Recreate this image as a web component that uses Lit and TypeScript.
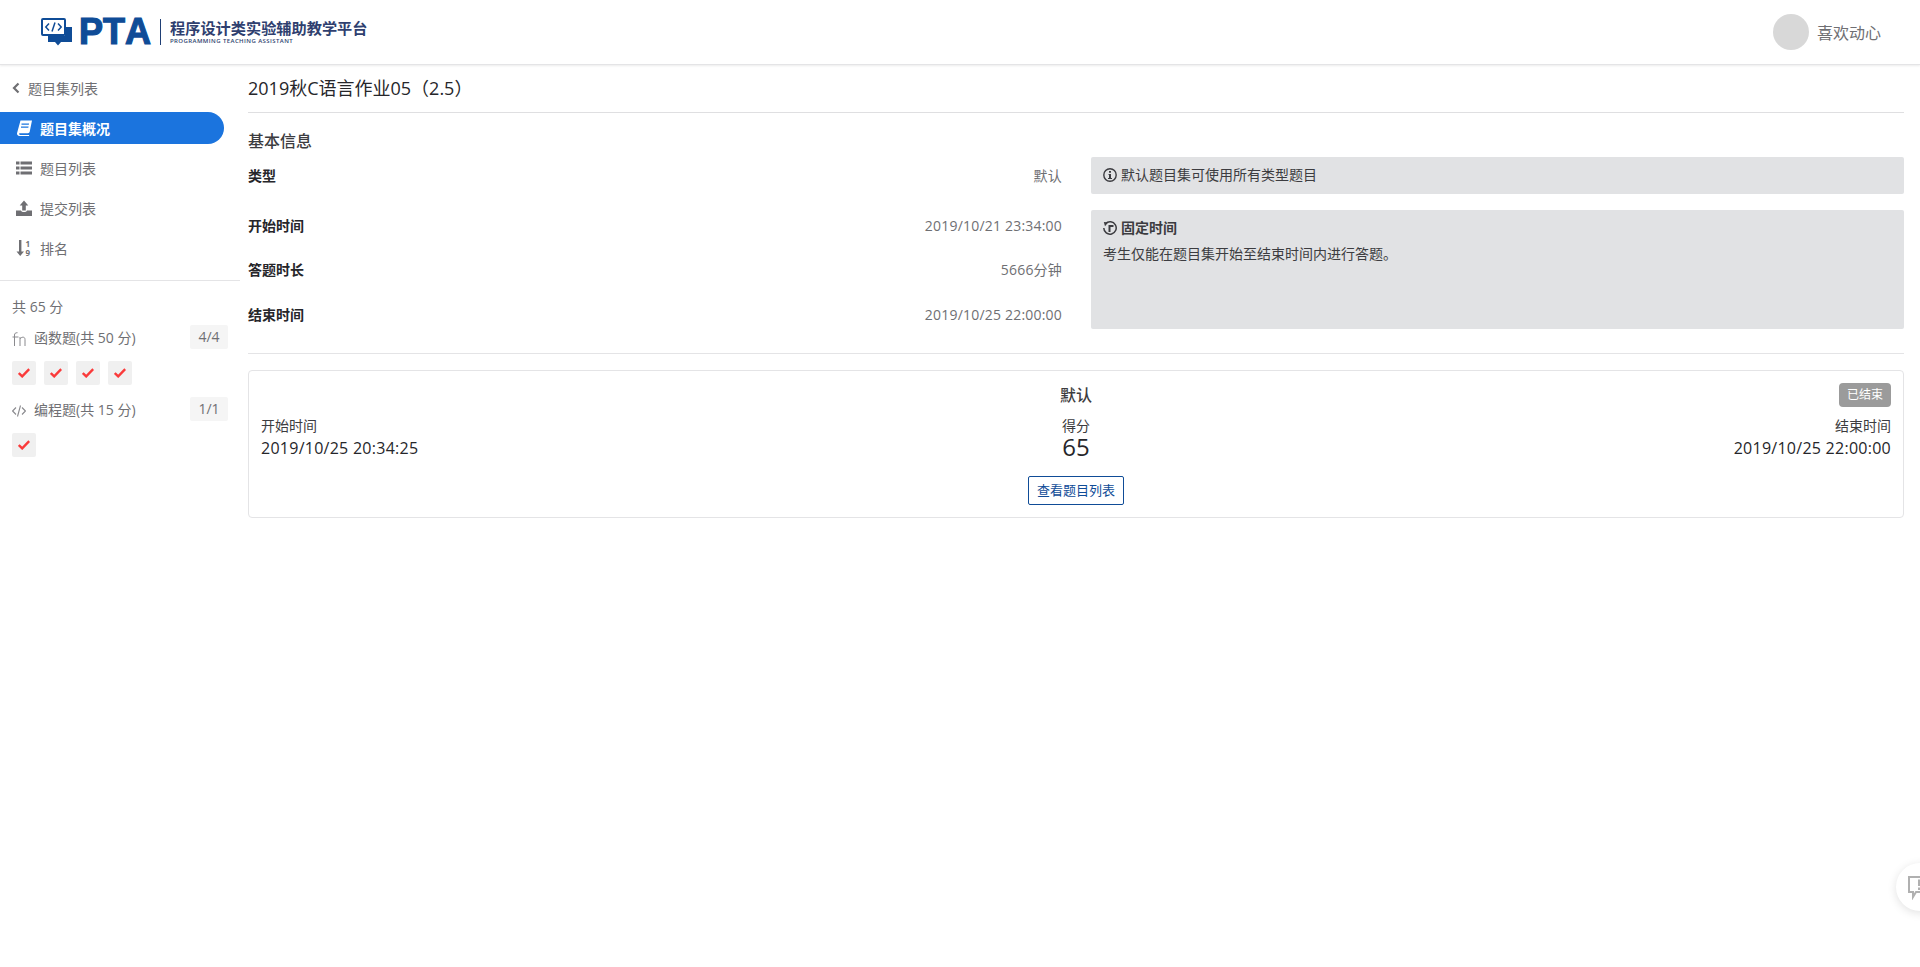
import { LitElement, html, css, svg } from 'lit';
import { customElement } from 'lit/decorators.js';

const checkIcon = svg`<svg class="check" viewBox="0 0 12 10"><path d="M.8 5 4.200 8.400 11.200 1.200" fill="none" stroke="#fa3a3a" stroke-width="2.400"/></svg>`;

const rows = [
  { label: '类型', value: '默认', cls: 'r-type' },
  { label: '开始时间', value: '2019/10/21 23:34:00', cls: 'r-start' },
  { label: '答题时长', value: '5666分钟', cls: 'r-dur' },
  { label: '结束时间', value: '2019/10/25 22:00:00', cls: 'r-end' },
];

@customElement('app-root')
export class AppRoot extends LitElement {
  static override styles = css`
    :host {
      display: block;
      height: 967px;
      overflow: hidden;
      position: relative;
      background: #fff;
      color: #3c3c40;
      font-family: 'Open Sans', 'Noto Sans CJK SC', sans-serif;
      font-size: 14px;
    }
    .topbar {
      height: 64px;
      display: flex;
      align-items: center;
      justify-content: space-between;
      padding: 0 40px;
      border-bottom: 1px solid #e4e4e6;
      box-shadow: 0 1px 2px rgba(0, 0, 0, 0.08);
    }
    .logo {
      display: flex;
      align-items: center;
      height: 32px;
    }
    .logo-mark {
      width: 31px;
      height: 28px;
      margin: 0 7px 0 1px;
    }
    .logo-pta {
      font-family: 'Liberation Sans', sans-serif;
      font-weight: 700;
      font-size: 36px;
      line-height: 32px;
      font-kerning: none;
      color: #0f4c97;
      -webkit-text-stroke: 1.2px #0f4c97;
      width: 74px;
    }
    .logo-sep {
      width: 1px;
      height: 26px;
      background: #1f3f75;
      margin: 0 9px 0 7px;
    }
    .logo-cn {
      font-size: 15.2px;
      line-height: 17px;
      font-weight: 700;
      color: #2f3f6f;
      white-space: nowrap;
    }
    .logo-en {
      font-family: 'Open Sans', sans-serif;
      font-size: 6px;
      line-height: 8px;
      font-weight: 600;
      letter-spacing: 0.42px;
      color: #2f3f6f;
      white-space: nowrap;
    }
    .user {
      display: flex;
      align-items: center;
      gap: 8px;
      margin-right: -1px;
      color: #6f6f73;
      font-size: 16px;
    }
    .avatar {
      width: 36px;
      height: 36px;
      border-radius: 50%;
      background: #d8d8d8;
    }
    .layout {
      display: flex;
    }
    .side {
      width: 240px;
      flex: none;
      padding-top: 7px;
      color: #6f6f73;
    }
    .back {
      height: 32px;
      display: flex;
      align-items: center;
      gap: 7px;
      padding-left: 11px;
    }
    .back svg {
      width: 10px;
      height: 12px;
    }
    .nav {
      margin-top: 8px;
      padding-bottom: 8px;
      border-bottom: 1px solid #e4e4e6;
    }
    .nav-item {
      width: 224px;
      height: 32px;
      margin-bottom: 8px;
      display: flex;
      align-items: center;
      padding-left: 16px;
      box-sizing: border-box;
      border-radius: 0 16px 16px 0;
    }
    .nav-item svg {
      width: 16px;
      height: 16px;
      margin-right: 8px;
      fill: #6f6f73;
      overflow: visible;
    }
    .nav-item.active {
      background: #1b74de;
      color: #fff;
      font-weight: 700;
    }
    .nav-item.active svg {
      fill: #fff;
    }
    .stats {
      padding: 16px 12px 0;
    }
    .total {
      line-height: 20px;
      margin-bottom: 8px;
    }
    .group-row {
      height: 24px;
      display: flex;
      align-items: center;
    }
    .group-row svg {
      width: 14px;
      height: 14px;
      margin: 4px 8px 0 0;
      flex: none;
    }
    .group-name {
      flex: 1;
    }
    .count {
      width: 38px;
      height: 24px;
      line-height: 24px;
      text-align: center;
      background: #f5f5f5;
      border-radius: 2px;
    }
    .tiles {
      display: flex;
      gap: 8px;
      margin: 12px 0;
    }
    .tile {
      width: 24px;
      height: 24px;
      display: flex;
      align-items: center;
      justify-content: center;
      background: #f0f0f0;
      border-radius: 2px;
    }
    .check {
      width: 12px;
      height: 10px;
    }
    .main {
      flex: 1;
      margin: 0 16px 0 8px;
    }
    .title {
      height: 47px;
      line-height: 46px;
      font-size: 18px;
      color: #26262a;
      border-bottom: 1px solid #dfdfe1;
    }
    h3 {
      margin: 0;
      padding-top: 15px;
      height: 29px;
      line-height: 26px;
      font-size: 16px;
      font-weight: 500;
      color: #3c3c40;
    }
    .info {
      display: grid;
      grid-template-columns: 814px 1fr;
      column-gap: 29px;
      padding-bottom: 24px;
      border-bottom: 1px solid #e4e4e6;
    }
    .info-rows {
      display: flex;
      flex-direction: column;
    }
    .info-row {
      display: flex;
      justify-content: space-between;
      line-height: 20px;
      color: #6f6f73;
    }
    .info-row span {
      letter-spacing: 0.2px;
    }
    .info-row b {
      color: #26262a;
      font-weight: 700;
    }
    .r-type {
      height: 59px;
      padding-top: 9px;
      box-sizing: border-box;
    }
    .r-start {
      height: 44px;
    }
    .r-dur {
      height: 45px;
    }
    .r-end {
      height: 20px;
    }
    .notes {
      display: flex;
      flex-direction: column;
      gap: 16px;
    }
    .note {
      background: #e1e2e4;
      border-radius: 2px;
      padding: 8px 12px;
      box-sizing: border-box;
      line-height: 20px;
      color: #3c3c40;
    }
    .note.short {
      height: 37px;
    }
    .note.tall {
      height: 119px;
    }
    .note-head {
      display: flex;
      align-items: center;
      gap: 4px;
    }
    .note-head svg {
      width: 14px;
      height: 14px;
    }
    .note p {
      margin: 6px 0 0;
    }
    .card {
      margin-top: 16px;
      height: 148px;
      box-sizing: border-box;
      border: 1px solid #e4e4e6;
      border-radius: 4px;
      padding: 12px;
      display: grid;
      grid-template-columns: 1fr auto 1fr;
      position: relative;
    }
    .card-left,
    .card-right {
      padding-top: 33px;
      line-height: 20px;
      color: #3c3c40;
    }
    .card-right {
      text-align: right;
    }
    .date {
      font-size: 16px;
      line-height: 24px;
      letter-spacing: 0.26px;
      color: #26262a;
    }
    .card-mid {
      display: flex;
      flex-direction: column;
      align-items: center;
    }
    .card-name {
      font-size: 16px;
      font-weight: 500;
      line-height: 24px;
      color: #3c3c40;
      margin-bottom: 9px;
    }
    .score-label {
      line-height: 20px;
    }
    .score {
      font-size: 24px;
      line-height: 22px;
      color: #26262a;
    }
    .btn {
      margin-top: 18px;
      padding: 0 8px;
      height: 29px;
      line-height: 27px;
      box-sizing: border-box;
      border: 1px solid #0f4c97;
      border-radius: 2px;
      background: #fff;
      color: #0f4c97;
      font-family: inherit;
      font-size: 13px;
    }
    .status {
      position: absolute;
      top: 12px;
      right: 12px;
      height: 24px;
      line-height: 24px;
      padding: 0 8px;
      font-size: 12px;
      color: #fff;
      background: #9b9b9b;
      border-radius: 4px;
    }
    .feedback {
      position: absolute;
      left: 1896px;
      top: 863px;
      width: 48px;
      height: 48px;
      border-radius: 50%;
      background: #fff;
      box-shadow: 0 2px 10px rgba(0, 0, 0, 0.12);
    }
    .feedback svg {
      position: absolute;
      left: 12px;
      top: 13px;
      width: 24px;
      height: 24px;
    }
  `;

  private renderLogo() {
    return html`<div class="logo">
      <svg class="logo-mark" viewBox="0 0 31 28">
        <path d="M7 18h17v-9h7v15H20l-3 3.500-3-3.500H7z" fill="#0f4c97" />
        <rect x="1" y="1" width="23" height="16" rx="1" fill="#fff" stroke="#0f4c97" stroke-width="2" />
        <path d="M8 5.500 4.800 9 8 12.500M17 5.500l3.200 3.500-3.200 3.500M14 4.500l-3 9" fill="none" stroke="#0f4c97" stroke-width="1.500" />
      </svg>
      <div class="logo-pta">PTA</div>
      <div class="logo-sep"></div>
      <div>
        <div class="logo-cn">程序设计类实验辅助教学平台</div>
        <div class="logo-en">PROGRAMMING TEACHING ASSISTANT</div>
      </div>
    </div>`;
  }

  private renderSide() {
    return html`<aside class="side">
      <div class="back">
        <svg viewBox="0 0 10 12"><path d="M7.500 1.500 3 6l4.500 4.500" fill="none" stroke="#6f6f73" stroke-width="2.200" /></svg>
        <span>题目集列表</span>
      </div>
      <div class="nav">
        <div class="nav-item active">
          <svg viewBox="0 0 16 16"><path fill-rule="evenodd" d="M4.500 .5H16l-2.300 11.300c-.2.900-.8 1.400-1.700 1.400H4c-.7 0-1 .4-.9.8s.4.900 1 .9h9v1H3.500C1.800 15.900.8 14.800 1 13.300zM5.500 3.500v1.300h7.300l.3-1.300zM5 6.500v1.300h7.300l.3-1.300z" /></svg>
          题目集概况
        </div>
        <div class="nav-item">
          <svg viewBox="0 0 16 16"><path d="M0 1.500h3.500v3H0zM4.500 1.500H16v3H4.500zM0 6.500h3.500v3H0zM4.500 6.500H16v3H4.500zM0 11.500h3.500v3H0zM4.500 11.500H16v3H4.500z" /></svg>
          题目列表
        </div>
        <div class="nav-item">
          <svg viewBox="0 0 16 16"><path d="M8 .5l4.300 5H9.800v5H6.200v-5H3.700zM0 10.500h5c.4 1 1.600 1.500 3 1.500s2.600-.5 3-1.500h5V16H0z" /></svg>
          提交列表
        </div>
        <div class="nav-item">
          <svg viewBox="0 0 16 16"><path d="M3 0h2.400v11.500H8L4.200 16 .5 11.500H3z" /><text x="9.500" y="6.500" font-size="8" font-weight="700" font-family="Open Sans" fill="#6f6f73">1</text><text x="9.500" y="15.500" font-size="8" font-weight="700" font-family="Open Sans" fill="#6f6f73">9</text></svg>
          排名
        </div>
      </div>
      <div class="stats">
        <div class="total">共 65 分</div>
        <div class="group-row">
          <svg viewBox="0 0 14 14"><path d="M.5 5h6M2.500 14V3c0-1.500.8-2.300 3-2.300M8 14V5M8 7c1-2 5-3 5 .5V14" fill="none" stroke="#8a8a8e" stroke-width="1" /></svg>
          <span class="group-name">函数题(共 50 分)</span>
          <span class="count">4/4</span>
        </div>
        <div class="tiles">
          ${[0, 1, 2, 3].map(() => html`<div class="tile">${checkIcon}</div>`)}
        </div>
        <div class="group-row">
          <svg viewBox="0 0 14 14"><path d="M4 3.500 .6 7 4 10.500M10 3.500 13.400 7 10 10.500M8.500 1.500l-3 11" fill="none" stroke="#8a8a8e" stroke-width="1.100" /></svg>
          <span class="group-name">编程题(共 15 分)</span>
          <span class="count">1/1</span>
        </div>
        <div class="tiles"><div class="tile">${checkIcon}</div></div>
      </div>
    </aside>`;
  }

  override render() {
    return html`
      <header class="topbar">
        ${this.renderLogo()}
        <div class="user"><div class="avatar"></div><span>喜欢动心</span></div>
      </header>
      <div class="layout">
        ${this.renderSide()}
        <main class="main">
          <div class="title">2019秋C语言作业05（2.5）</div>
          <h3>基本信息</h3>
          <div class="info">
            <div class="info-rows">
              ${rows.map(
                (r) => html`<div class="info-row ${r.cls}"><b>${r.label}</b><span>${r.value}</span></div>`,
              )}
            </div>
            <div class="notes">
              <div class="note short">
                <div class="note-head">
                  <svg viewBox="0 0 14 14"><circle cx="7" cy="7" r="6.200" fill="none" stroke="#3c3c40" stroke-width="1.400" /><path d="M6 3h2v1.800H6zM5.500 6h2.500v4h1v1H5v-1h1V7h-.5z" fill="#3c3c40" /></svg>
                  <span>默认题目集可使用所有类型题目</span>
                </div>
              </div>
              <div class="note tall">
                <div class="note-head">
                  <svg viewBox="0 0 14 14"><path d="M2.600 2.600A6.200 6.200 0 1 1 .8 7" fill="none" stroke="#3c3c40" stroke-width="1.500" /><path d="M.8 1 5 1.500 2 5.200zM5.500 4h5v2H7.500v5h-2z" fill="#3c3c40" /></svg>
                  <b>固定时间</b>
                </div>
                <p>考生仅能在题目集开始至结束时间内进行答题。</p>
              </div>
            </div>
          </div>
          <section class="card">
            <div class="card-left">
              <div>开始时间</div>
              <div class="date">2019/10/25 20:34:25</div>
            </div>
            <div class="card-mid">
              <div class="card-name">默认</div>
              <div class="score-label">得分</div>
              <div class="score">65</div>
              <button class="btn">查看题目列表</button>
            </div>
            <div class="card-right">
              <div>结束时间</div>
              <div class="date">2019/10/25 22:00:00</div>
            </div>
            <span class="status">已结束</span>
          </section>
        </main>
      </div>
      <div class="feedback">
        <svg viewBox="0 0 24 24"><path d="M1 1h22v15H8l-3 5v-5H1z" fill="none" stroke="#b0b0b0" stroke-width="2" /><path d="M10 3.500h2.500v6.500H10zM10 11.500h2.500V14H10z" fill="#b0b0b0" /></svg>
      </div>
    `;
  }
}
